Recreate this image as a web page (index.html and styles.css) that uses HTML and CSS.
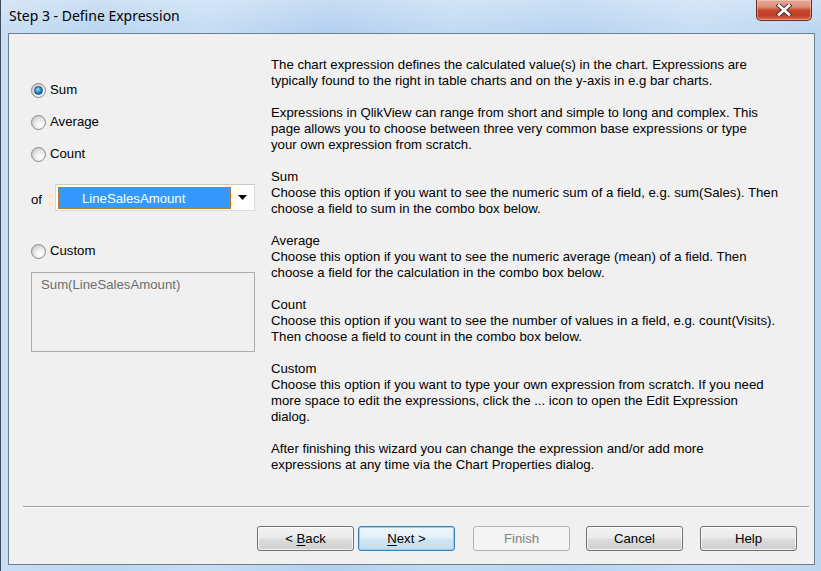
FILE: index.html
```html
<!DOCTYPE html>
<html>
<head>
<meta charset="utf-8">
<title>Step 3 - Define Expression</title>
<link rel="stylesheet" href="styles.css">
</head>
<body>
<div class="window">
  <div class="titlebar">
    <span class="title">Step 3 - Define Expression</span>
    <div class="close">
      <svg width="18" height="12" viewBox="0 0 18 12">
        <path d="M4 1.5 L14 10.5 M14 1.5 L4 10.5" stroke="#3d3d3d" stroke-width="4.6" stroke-linecap="square" fill="none"/>
        <path d="M4 1.5 L14 10.5 M14 1.5 L4 10.5" stroke="#ffffff" stroke-width="2.6" stroke-linecap="square" fill="none"/>
      </svg>
    </div>
  </div>
  <div class="client">
    <div class="main">
      <div class="left">
        <div class="radio-row"><span class="radio checked"></span><span class="label">Sum</span></div>
        <div class="radio-row"><span class="radio"></span><span class="label">Average</span></div>
        <div class="radio-row"><span class="radio"></span><span class="label">Count</span></div>
        <div class="of-row">
          <span class="of">of</span>
          <div class="combo">
            <div class="combo-value">LineSalesAmount</div>
            <div class="combo-arrow">
              <svg width="10" height="6" viewBox="0 0 10 6"><path d="M0 0 H9 L4.5 5 Z" fill="#000"/></svg>
            </div>
          </div>
        </div>
        <div class="radio-row short"><span class="radio"></span><span class="label">Custom</span></div>
        <div class="expr">Sum(LineSalesAmount)</div>
      </div>
      <div class="help">
        <p>The chart expression defines the calculated value(s) in the chart. Expressions are<br>typically found to the right in table charts and on the y-axis in e.g bar charts.</p>
        <p>Expressions in QlikView can range from short and simple to long and complex. This<br>page allows you to choose between three very common base expressions or type<br>your own expression from scratch.</p>
        <p>Sum<br>Choose this option if you want to see the numeric sum of a field, e.g. sum(Sales). Then<br>choose a field to sum in the combo box below.</p>
        <p>Average<br>Choose this option if you want to see the numeric average (mean) of a field. Then<br>choose a field for the calculation in the combo box below.</p>
        <p>Count<br>Choose this option if you want to see the number of values in a field, e.g. count(Visits).<br>Then choose a field to count in the combo box below.</p>
        <p>Custom<br>Choose this option if you want to type your own expression from scratch. If you need<br>more space to edit the expressions, click the ... icon to open the Edit Expression<br>dialog.</p>
        <p>After finishing this wizard you can change the expression and/or add more<br>expressions at any time via the Chart Properties dialog.</p>
      </div>
    </div>
    <div class="sep"></div>
    <div class="buttons">
      <div class="btn"><span>&lt; <u>B</u>ack</span></div>
      <div class="btn default"><span><u>N</u>ext &gt;</span></div>
      <div class="btn disabled finish"><span>Finish</span></div>
      <div class="btn cancel"><span>Cancel</span></div>
      <div class="btn help-btn"><span>Help</span></div>
    </div>
  </div>
</div>
</body>
</html>
```

FILE: styles.css
```css
html, body {
  margin: 0;
  padding: 0;
}
body {
  width: 821px;
  height: 571px;
  overflow: hidden;
  font-family: "Liberation Sans", Arial, sans-serif;
  font-size: 13.2px;
  color: #000;
}
.window {
  width: 821px;
  height: 571px;
  box-sizing: border-box;
  border-left: 1px solid #3c4c5e;
  display: flex;
  flex-direction: column;
  background:
    linear-gradient(180deg, rgba(255,255,255,0.25) 0px, rgba(255,255,255,0) 30px),
    linear-gradient(90deg, #c9def3 0%, #bcd6f1 12%, #c6ddf4 25%, #b4d0ef 40%, #c2dbf4 55%, #b9d4f1 70%, #c8def4 85%, #bdd6f0 100%);
}
.titlebar {
  height: 33px;
  display: flex;
  align-items: flex-start;
  flex: none;
}
.title {
  font-family: "Noto Sans", "Open Sans", sans-serif;
  font-size: 14px;
  line-height: 18px;
  margin: 7px 0 0 8px;
  color: #000;
}
.close {
  margin-left: auto;
  margin-right: 9px;
  width: 56px;
  height: 21px;
  box-sizing: border-box;
  border: 1px solid #6a2a20;
  border-top: none;
  border-radius: 0 0 5px 5px;
  background: linear-gradient(180deg, #e8a898 0%, #dc8a76 35%, #c8492f 50%, #c23c26 75%, #d86a4a 100%);
  box-shadow: inset 0 0 0 1px rgba(255,220,210,0.45);
  display: flex;
  align-items: center;
  justify-content: center;
}
.client {
  flex: 1;
  margin: 0 6px 6px 7px;
  border: 1px solid #6f7e8e;
  background: #f0f0f0;
  display: flex;
  flex-direction: column;
}
.main {
  flex: 1;
  display: flex;
  padding-top: 23px;
}
.left {
  margin-left: 22px;
  width: 224px;
  padding-top: 17px;
  display: flex;
  flex-direction: column;
}
.radio-row {
  height: 32px;
  display: flex;
  align-items: center;
}
.radio-row.short {
  height: 16px;
  margin-top: 32px;
}
.radio {
  width: 15px;
  height: 15px;
  box-sizing: border-box;
  border-radius: 50%;
  border: 1px solid #8a8a8a;
  background: radial-gradient(circle at 65% 70%, #ffffff 0%, #f0f0f0 35%, #cfcfcf 75%, #bdbdbd 100%);
  margin-right: 4px;
  flex: none;
  position: relative;
}
.radio.checked::after {
  content: "";
  position: absolute;
  left: 2px;
  top: 2px;
  width: 9px;
  height: 9px;
  border-radius: 50%;
  box-sizing: border-box;
  border: 1px solid #1c4f7c;
  background: radial-gradient(circle at 40% 35%, #a8e0ff 0%, #3a9ad6 40%, #0d5a92 80%, #0a4a7a 100%);
}
.label {
  line-height: 16px;
}
.of-row {
  margin-top: 14px;
  height: 27px;
  display: flex;
  align-items: center;
}
.of {
  width: 24px;
  line-height: 16px;
  padding-top: 4px;
}
.combo {
  width: 200px;
  height: 27px;
  box-sizing: border-box;
  border: 1px solid #d9d9d9;
  border-top-color: #c8c8c8;
  background: #fff;
  display: flex;
  align-items: center;
  padding: 1px 0 1px 2px;
}
.combo-value {
  width: 173px;
  height: 22px;
  box-sizing: border-box;
  background: #3399ff;
  outline: 1px dotted #b8761e;
  outline-offset: -1px;
  color: #fff;
  line-height: 23px;
  padding-left: 24px;
}
.combo-arrow {
  flex: 1;
  display: flex;
  align-items: center;
  justify-content: center;
  padding-top: 1px;
}
.expr {
  margin-top: 13px;
  height: 80px;
  box-sizing: border-box;
  border: 1px solid #acacac;
  background: #f0f0f0;
  color: #6d6d6d;
  padding: 4px 9px;
  line-height: 16px;
}
.help {
  margin-left: 16px;
  white-space: nowrap;
}
.help p {
  margin: 0 0 16px 0;
  line-height: 16px;
}
.sep {
  margin: 0 5px 0 14px;
  border-top: 1px solid #a0a0a0;
  border-bottom: 1px solid #ffffff;
  height: 0;
}
.buttons {
  display: flex;
  justify-content: flex-end;
  padding: 18px 17px 13px 0;
}
.btn {
  width: 97px;
  height: 25px;
  box-sizing: border-box;
  border: 1px solid #707070;
  border-radius: 3px;
  background: linear-gradient(180deg, #f2f2f2 0%, #ebebeb 48%, #dddddd 52%, #cfcfcf 100%);
  box-shadow: inset 0 0 0 1px rgba(255,255,255,0.7);
  display: flex;
  align-items: center;
  justify-content: center;
  line-height: 16px;
  white-space: pre;
}
.btn u {
  text-decoration: underline;
  text-underline-offset: 2px;
}
.btn.default {
  margin-left: 4px;
  border-color: #3c7fb1;
  background: linear-gradient(180deg, #eef7fc 0%, #e2f0f8 48%, #d0e6f3 52%, #c3dcec 100%);
  box-shadow: inset 0 0 0 1px #8fd3f7;
}
.btn.disabled {
  border-color: #adb2b5;
  background: #f4f4f4;
  box-shadow: none;
  color: #838383;
}
.finish { margin-left: 18px; }
.cancel { margin-left: 16px; }
.help-btn { margin-left: 17px; }
```
